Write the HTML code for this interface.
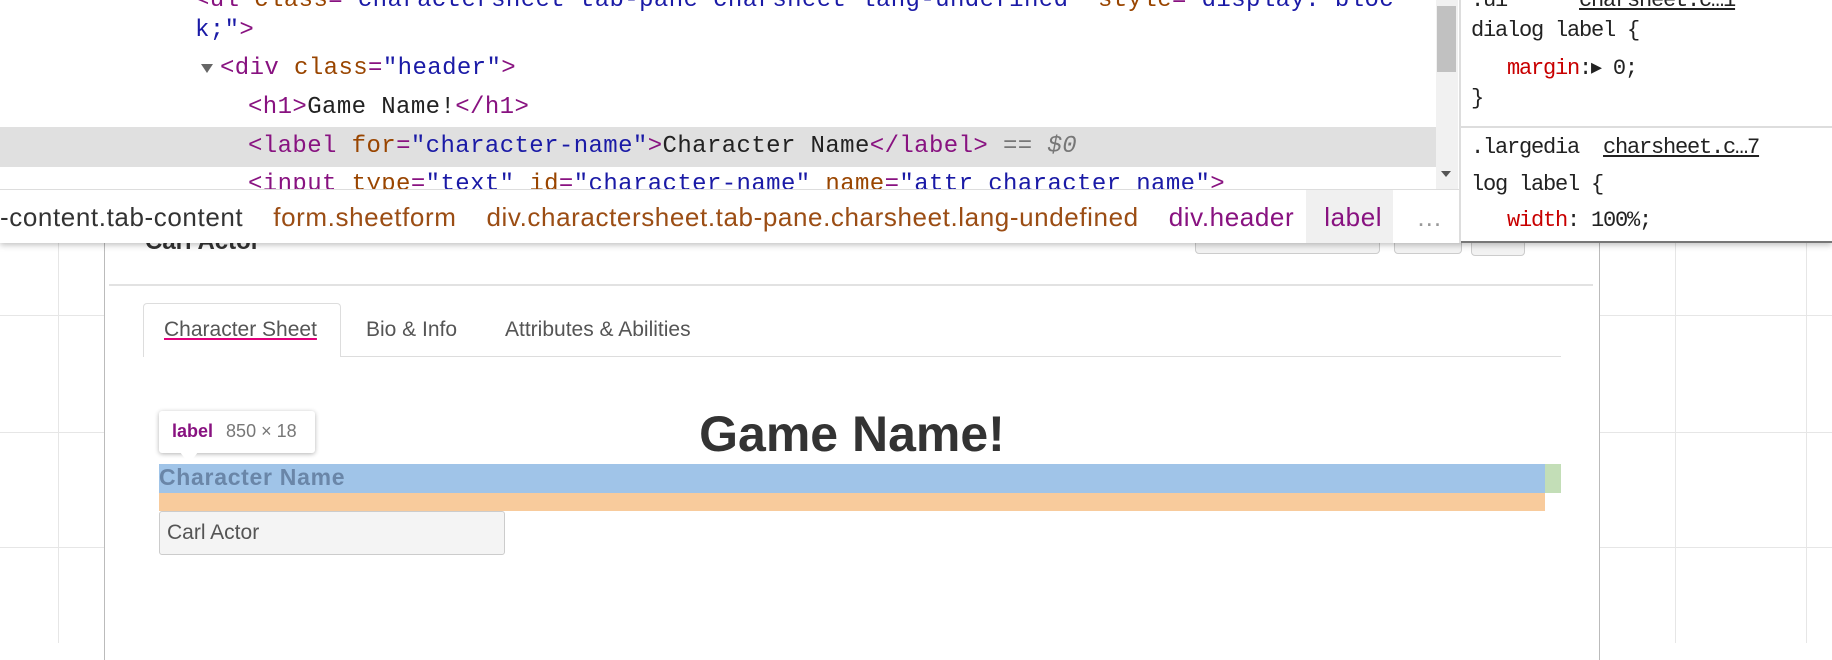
<!DOCTYPE html>
<html><head><meta charset="utf-8"><style>
*{margin:0;padding:0;box-sizing:border-box}
body{width:1832px;height:642px;overflow:hidden;background:#fff;position:relative;font-family:"Liberation Sans",Arial,sans-serif}
.a{position:absolute}
.mono{font-family:"Liberation Mono",monospace;font-size:24px;letter-spacing:0.4px;white-space:pre}
.sty{font-family:"Liberation Mono",monospace;font-size:22px;letter-spacing:-1.2px;white-space:pre}
.tg{color:#881280}.at{color:#994500}.av{color:#1a1aa6}.tx{color:#222}
.gl{background:#e6e6e6}
</style></head><body>
<div class="a gl" style="left:58px;top:243px;width:1px;height:400px"></div>
<div class="a gl" style="left:1675px;top:243px;width:1px;height:400px"></div>
<div class="a gl" style="left:1806px;top:243px;width:1px;height:400px"></div>
<div class="a gl" style="left:0;top:315px;width:104px;height:1px"></div>
<div class="a gl" style="left:0;top:432px;width:104px;height:1px"></div>
<div class="a gl" style="left:0;top:547px;width:104px;height:1px"></div>
<div class="a gl" style="left:1600px;top:315px;width:232px;height:1px"></div>
<div class="a gl" style="left:1600px;top:432px;width:232px;height:1px"></div>
<div class="a gl" style="left:1600px;top:547px;width:232px;height:1px"></div>
<div class="a" style="left:104px;top:200px;width:1496px;height:460px;border-left:1px solid #bbb;border-right:1px solid #bbb;background:#fff"></div>
<div class="a" style="left:145px;top:228px;font-size:24px;font-weight:bold;color:#333">Carl Actor</div>
<div class="a" style="left:1195px;top:220px;width:185px;height:34px;border:1px solid #ccc;border-radius:4px;background:#f2f2f2"></div>
<div class="a" style="left:1394px;top:220px;width:68px;height:34px;border:1px solid #ccc;border-radius:4px;background:#f2f2f2"></div>
<div class="a" style="left:1471px;top:220px;width:54px;height:36px;border:1px solid #ccc;border-radius:4px;background:#f2f2f2"></div>
<div class="a" style="left:109px;top:284px;width:1484px;height:2px;background:#e2e2e2"></div>
<div class="a" style="left:143px;top:356px;width:1418px;height:1px;background:#ddd"></div>
<div class="a" style="left:143px;top:303px;width:198px;height:54px;border:1px solid #ddd;border-bottom:none;border-radius:4px 4px 0 0;background:#fff"></div>
<div class="a" style="left:164px;top:318px;font-size:21px;color:#555;text-decoration:underline;text-decoration-color:#e0007a">Character Sheet</div>
<div class="a" style="left:366px;top:318px;font-size:21px;color:#555">Bio &amp; Info</div>
<div class="a" style="left:505px;top:318px;font-size:21px;color:#555">Attributes &amp; Abilities</div>
<div class="a" style="left:600px;top:405px;width:504px;text-align:center;font-size:50px;font-weight:bold;color:#333">Game Name!</div>
<div class="a" style="left:159px;top:464px;width:1386px;height:29px;background:#a0c4e8"></div>
<div class="a" style="left:1545px;top:464px;width:16px;height:29px;background:#c3deb7"></div>
<div class="a" style="left:159px;top:493px;width:1386px;height:18px;background:#f8cb9c"></div>
<div class="a" style="left:159px;top:464px;font-size:23px;letter-spacing:0.7px;font-weight:bold;color:#6a86a8">Character Name</div>
<div class="a" style="left:159px;top:511px;width:346px;height:44px;border:1px solid #ccc;border-radius:3px;background:#f4f4f4"></div>
<div class="a" style="left:167px;top:521px;font-size:21px;color:#555">Carl Actor</div>
<div class="a" style="left:159px;top:411px;width:156px;height:42px;background:#fff;border-radius:3px;box-shadow:0 1px 5px rgba(0,0,0,.3)"></div>
<div class="a" style="left:180px;top:452px;width:0;height:0;border-left:9px solid transparent;border-right:9px solid transparent;border-top:12px solid #fff"></div>
<div class="a" style="left:172px;top:421px;font-size:18px;white-space:nowrap"><b style="color:#881280">label</b> <span style="color:#777;margin-left:8px">850 × 18</span></div>
<div class="a" style="left:0;top:0;width:1832px;height:243px;background:#fff;border-bottom:2px solid #777;box-shadow:0 2px 6px rgba(0,0,0,.25)"></div>
<div class="a" style="left:0;top:127px;width:1436px;height:40px;background:#e0e0e0"></div>
<div class="a mono" style="left:195px;top:-13px"><span class="tg">&lt;ul</span> <span class="at">class</span><span class="tg">=</span><span class="av">"charactersheet tab-pane charsheet lang-undefined"</span> <span class="at">style</span><span class="tg">=</span><span class="av">"display: bloc</span></div>
<div class="a mono" style="left:195px;top:17px"><span class="av">k;"</span><span class="tg">&gt;</span></div>
<div class="a" style="left:201px;top:64px;border-left:6px solid transparent;border-right:6px solid transparent;border-top:9px solid #666"></div>
<div class="a mono" style="left:220px;top:55px"><span class="tg">&lt;div</span> <span class="at">class</span><span class="tg">=</span><span class="av">"header"</span><span class="tg">&gt;</span></div>
<div class="a mono" style="left:248px;top:94px"><span class="tg">&lt;h1&gt;</span><span class="tx">Game Name!</span><span class="tg">&lt;/h1&gt;</span></div>
<div class="a mono" style="left:248px;top:133px"><span class="tg">&lt;label</span> <span class="at">for</span><span class="tg">=</span><span class="av">"character-name"</span><span class="tg">&gt;</span><span class="tx">Character Name</span><span class="tg">&lt;/label&gt;</span> <span style="color:#777">== <i>$0</i></span></div>
<div class="a mono" style="left:248px;top:171px;height:18px;overflow:hidden"><span class="tg">&lt;input</span> <span class="at">type</span><span class="tg">=</span><span class="av">"text"</span> <span class="at">id</span><span class="tg">=</span><span class="av">"character-name"</span> <span class="at">name</span><span class="tg">=</span><span class="av">"attr_character_name"</span><span class="tg">&gt;</span></div>
<div class="a" style="left:1436px;top:0;width:22px;height:189px;background:#f1f1f1"></div>
<div class="a" style="left:1437px;top:6px;width:19px;height:66px;background:#c1c1c1"></div>
<div class="a" style="left:1441px;top:171px;border-left:5px solid transparent;border-right:5px solid transparent;border-top:6px solid #555"></div>
<div class="a" style="left:0;top:189px;width:1459px;height:54px;background:#fff;border-top:1px solid #ddd"></div>
<div class="a" style="left:1306px;top:190px;width:87px;height:53px;background:#f0f0f0"></div>
<div class="a" style="left:0;top:202px;font-size:26px;white-space:nowrap;letter-spacing:0.6px"><span style="color:#333">-content.tab-content</span><span style="color:#9b4d14;margin-left:30px">form.sheetform</span><span style="color:#9b4d14;margin-left:30px">div.charactersheet.tab-pane.charsheet.lang-undefined</span><span style="color:#881280;margin-left:30px">div.header</span><span style="color:#881280;margin-left:30px">label</span><span style="color:#999;margin-left:34px">…</span></div>
<div class="a" style="left:1459px;top:0;width:2px;height:243px;background:#ddd"></div>
<div class="a" style="left:1461px;top:126px;width:371px;height:2px;background:#ddd"></div>
<div class="a sty" style="left:1471px;top:-12px"><span class="tx">.ui      <u>charsheet.c…1</u></span></div>
<div class="a sty" style="left:1471px;top:18px"><span class="tx">dialog label {</span></div>
<div class="a sty" style="left:1471px;top:55px"><span class="tx">   </span><span style="color:#c80000">margin</span><span class="tx">:▸ 0;</span></div>
<div class="a sty" style="left:1471px;top:86px"><span class="tx">}</span></div>
<div class="a sty" style="left:1471px;top:135px"><span class="tx">.largedia  <u>charsheet.c…7</u></span></div>
<div class="a sty" style="left:1471px;top:172px"><span class="tx">log label {</span></div>
<div class="a sty" style="left:1471px;top:208px"><span class="tx">   </span><span style="color:#c80000">width</span><span class="tx">: 100%;</span></div>
</body></html>
